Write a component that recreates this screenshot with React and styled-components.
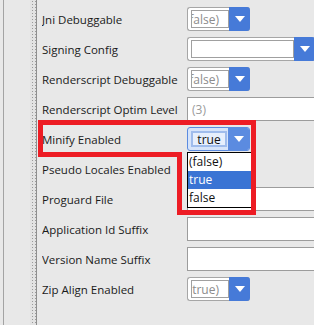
import React from "react";
import styled, { createGlobalStyle, css } from "styled-components";

const GlobalStyle = createGlobalStyle`
  html, body {
    margin: 0;
    padding: 0;
    background: #e8e8e8;
  }
`;

const Page = styled.div`
  position: relative;
  width: 314px;
  height: 325px;
  overflow: hidden;
  display: flex;
  background: #e8e8e8;
  font-family: "Open Sans", "Noto Sans", sans-serif;
  font-size: 11.5px;
  color: #1a1a1a;
`;

const Gutter = styled.div`
  width: 30px;
  flex-shrink: 0;
  display: flex;
`;

const GutterLine = styled.div`
  width: 1px;
  margin-left: 3px;
  background: #a3a3a3;
`;

const Splitter = styled.div`
  width: 6px;
  flex-shrink: 0;
  border-right: 1px solid #8e8e8e;
  background-color: #e2e2e2;
  background-image: radial-gradient(#9a9a9a 0.8px, transparent 0.9px);
  background-size: 3px 3px;
  background-position: 1px 0;
`;

const Sheet = styled.div`
  flex: 1;
  padding: 4px 0 0 5px;
  display: flex;
  flex-direction: column;
`;

const Row = styled.div`
  display: grid;
  grid-template-columns: 145px 1fr;
  align-items: center;
  height: 30px;
`;

const Label = styled.span`
  white-space: nowrap;
  overflow: hidden;
`;

const ComboBox = styled.div`
  position: relative;
  display: flex;
  width: ${({ $wide }) => ($wide ? "128px" : "63px")};
  height: 24px;
  box-sizing: border-box;
  border: 1px solid #a6a6a6;
  border-right: none;
  border-radius: 3px;
  background: #fff;
  ${({ $focused }) =>
    $focused &&
    css`
      border: 1px solid #5b8be0;
      background: #d6e4fa;
    `}
`;

const ComboField = styled.div`
  flex: 1;
  min-width: 0;
  margin: 2px 0 2px 3px;
  box-sizing: border-box;
  border: 1px solid #a0a0a0;
  background: #fff;
  color: #8c8c8c;
  display: flex;
  justify-content: flex-end;
  align-items: center;
  overflow: hidden;
  white-space: nowrap;
  padding-right: 9px;
  font-size: 12px;
  ${({ $focused }) =>
    $focused &&
    css`
      border: 2px solid #9fbcec;
      background: #e6effd;
      color: #111;
      justify-content: center;
      padding-right: 0;
      margin: 3px 0 3px 3px;
    `}
`;

const ComboButton = styled.div`
  width: 21px;
  margin: -1px 0;
  flex-shrink: 0;
  display: flex;
  align-items: center;
  justify-content: center;
  background: #467ad8;
  border-radius: 0 3px 3px 0;
  ${({ $focused }) =>
    $focused &&
    css`
      background: #5b8be0;
      margin: 0 0 0 1px;
      border-radius: 0 2px 2px 0;
    `}
`;

const Arrow = styled.span`
  width: 0;
  height: 0;
  border-left: 5px solid transparent;
  border-right: 5px solid transparent;
  border-top: 6px solid #fff;
`;

const TextField = styled.div`
  height: 24px;
  box-sizing: border-box;
  border: 1px solid #9c9c9c;
  border-right: none;
  background: #fff;
  color: #9a9a9a;
  display: flex;
  align-items: center;
  padding-left: 4px;
  font-size: 12px;
`;

const PopupList = styled.ul`
  position: absolute;
  top: calc(100% + 2px);
  left: -1px;
  width: 65px;
  margin: 0;
  padding: 0;
  list-style: none;
  box-sizing: border-box;
  border: 1px solid #000;
  background: #fff;
  z-index: 2;
`;

const PopupItem = styled.li`
  height: 18px;
  line-height: 18px;
  padding-left: 1px;
  font-size: 12px;
  color: ${({ $selected }) => ($selected ? "#fff" : "#111")};
  background: ${({ $selected }) => ($selected ? "#3a74d4" : "transparent")};
`;

const Annotation = styled.svg`
  position: absolute;
  left: 0;
  top: 0;
  pointer-events: none;
  z-index: 5;
`;

function Combo({ value, wide, focused, options }) {
  return (
    <ComboBox $wide={wide} $focused={focused}>
      <ComboField $focused={focused}>{value}</ComboField>
      <ComboButton $focused={focused}>
        <Arrow />
      </ComboButton>
      {options && (
        <PopupList>
          {options.map((o) => (
            <PopupItem key={o} $selected={o === value}>
              {o}
            </PopupItem>
          ))}
        </PopupList>
      )}
    </ComboBox>
  );
}

// pseudo locales value sits under the open popup, so it is left blank
const rows = [
  { label: "Jni Debuggable", combo: "(false)" },
  { label: "Signing Config", combo: "", wide: true },
  { label: "Renderscript Debuggable", combo: "(false)" },
  { label: "Renderscript Optim Level", text: "(3)" },
  {
    label: "Minify Enabled",
    combo: "true",
    focused: true,
    options: ["(false)", "true", "false"],
  },
  { label: "Pseudo Locales Enabled", combo: "" },
  { label: "Proguard File", text: "" },
  { label: "Application Id Suffix", text: "" },
  { label: "Version Name Suffix", text: "" },
  { label: "Zip Align Enabled", combo: "(true)" },
];

export default function App() {
  return (
    <Page>
      <GlobalStyle />
      <Gutter>
        <GutterLine />
      </Gutter>
      <Splitter />
      <Sheet>
        {rows.map((r) => (
          <Row key={r.label}>
            <Label>{r.label}</Label>
            {r.text !== undefined ? (
              <TextField>{r.text}</TextField>
            ) : (
              <Combo
                value={r.combo}
                wide={r.wide}
                focused={r.focused}
                options={r.options}
              />
            )}
          </Row>
        ))}
      </Sheet>
      <Annotation width="314" height="325" viewBox="0 0 314 325">
        <path
          d="M40.5 122.5 H253.5 V212.5 H179.5 V154.5 H40.5 Z"
          fill="none"
          stroke="#ed1c24"
          strokeWidth="5"
        />
      </Annotation>
    </Page>
  );
}
